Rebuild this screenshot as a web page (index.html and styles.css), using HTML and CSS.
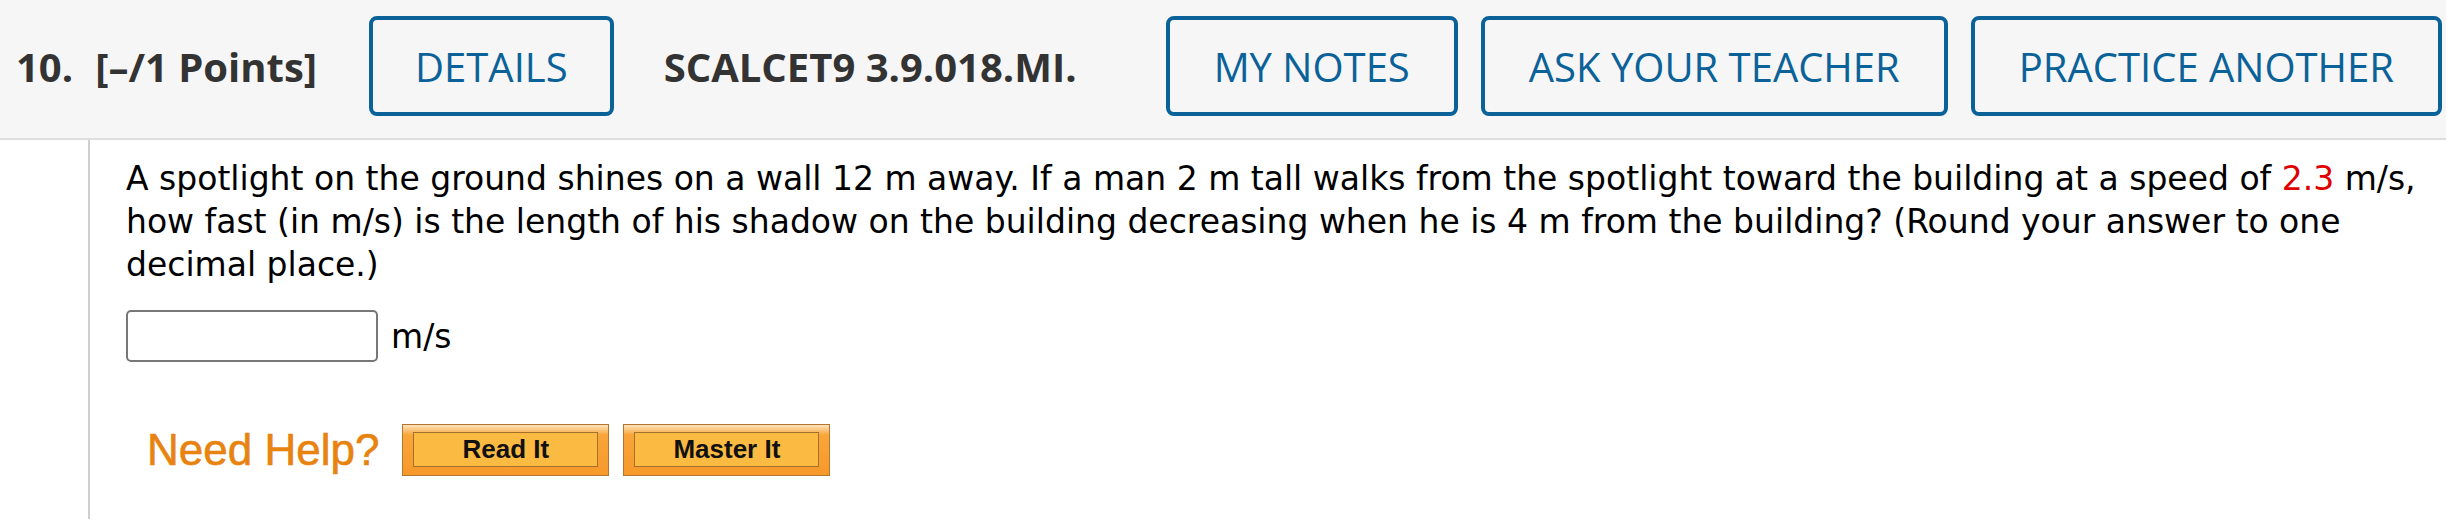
FILE: index.html
```html
<!DOCTYPE html>
<html lang="en">
<head>
<meta charset="utf-8">
<title>Question 10</title>
<link rel="stylesheet" href="styles.css">
</head>
<body>
<div class="question">
  <div class="qhead">
    <div class="qnum"><span class="num">10.</span><span class="pts">[–/1 Points]</span></div>
    <button class="tab">DETAILS</button>
    <div class="qcode">SCALCET9 3.9.018.MI.</div>
    <div class="actions">
      <button class="tab">MY NOTES</button>
      <button class="tab">ASK YOUR TEACHER</button>
      <button class="tab">PRACTICE ANOTHER</button>
    </div>
  </div>
  <div class="qbody">
    <div class="content">
      <p class="prompt">A spotlight on the ground shines on a wall 12 m away. If a man 2 m tall walks from the spotlight toward the building at a speed of <span class="val">2.3</span> m/s, how fast (in m/s) is the length of his shadow on the building decreasing when he is 4 m from the building? (Round your answer to one decimal place.)</p>
      <div class="answer"><input class="ans" type="text"><span class="unit">m/s</span></div>
      <div class="help">
        <span class="needhelp">Need Help?</span>
        <button class="hbtn"><span class="hin">Read It</span></button>
        <button class="hbtn"><span class="hin">Master It</span></button>
      </div>
    </div>
  </div>
</div>
</body>
</html>
```

FILE: styles.css
```css
html, body {
  margin: 0;
  padding: 0;
  background: #fff;
}
body {
  width: 2446px;
  height: 521px;
  overflow: hidden;
}
.qhead {
  display: flex;
  align-items: center;
  height: 140px;
  box-sizing: border-box;
  padding: 0 4px 6px 16px;
  background: #f6f6f6;
  border-bottom: 2px solid #dedede;
  font-family: "Open Sans", sans-serif;
}
.qnum {
  font-weight: 700;
  font-size: 40px;
  color: #333;
  display: flex;
  gap: 22px;
}
.tab {
  font-family: "Open Sans", sans-serif;
  font-size: 40px;
  color: #0b6299;
  background: #f6f6f6;
  border: 4px solid #0b6299;
  border-radius: 8px;
  height: 100px;
  padding: 0 44px;
  box-sizing: border-box;
  cursor: pointer;
}
.qnum + .tab {
  margin-left: 52px;
  padding: 0 42px;
}
.qcode {
  margin-left: 50px;
  font-weight: 700;
  font-size: 40px;
  color: #333;
}
.actions {
  margin-left: auto;
  display: flex;
  gap: 23px;
}
.qbody {
  padding-left: 88px;
}
.content {
  border-left: 2px solid #cfcfcf;
  min-height: 379px;
  padding-left: 36px;
  box-sizing: border-box;
}
.prompt {
  margin: 0;
  padding-top: 17px;
  font-family: "DejaVu Sans", Verdana, sans-serif;
  font-size: 33px;
  line-height: 43px;
  color: #000;
  max-width: 2310px;
}
.val {
  color: #e00000;
}
.answer {
  display: flex;
  align-items: center;
  margin-top: 24px;
  gap: 13px;
}
.ans {
  width: 252px;
  height: 52px;
  box-sizing: border-box;
  border: 2px solid #777;
  border-radius: 5px;
  margin: 0;
}
.unit {
  font-family: "DejaVu Sans", Verdana, sans-serif;
  font-size: 33px;
  color: #000;
}
.help {
  display: flex;
  align-items: center;
  margin-top: 62px;
  padding-left: 21px;
  gap: 14px;
}
.needhelp {
  font-family: "Liberation Sans", Arial, sans-serif;
  font-size: 44px;
  color: #e8830f;
  margin-right: 9px;
  -webkit-text-stroke: 0.6px #e8830f;
}
.hbtn {
  width: 207px;
  height: 52px;
  box-sizing: border-box;
  padding: 7px 10px 8px;
  border: 1px solid #b47531;
  background: linear-gradient(#fde3bb 0, #f9a53a 10px, #f7992a 100%);
  display: flex;
  cursor: pointer;
}
.hin {
  flex: 1;
  display: flex;
  align-items: center;
  justify-content: center;
  border: 1px solid #a36f2f;
  background: #fbbb43;
  font-family: "Liberation Sans", Arial, sans-serif;
  font-weight: 700;
  font-size: 26px;
  color: #111;
}
```
